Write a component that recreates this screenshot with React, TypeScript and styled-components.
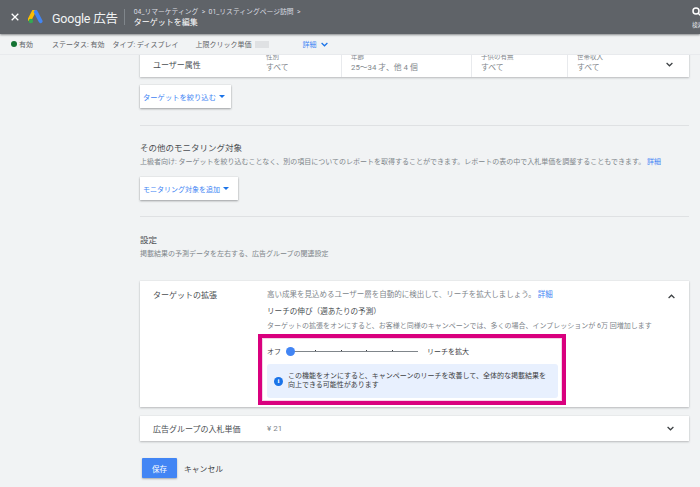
import React from "react";
import styled, { createGlobalStyle } from "styled-components";

const Global = createGlobalStyle`
  html, body { margin: 0; padding: 0; background: #f1f3f4; }
  body { font-family: Roboto, "Noto Sans CJK JP", sans-serif; color: #3c4043; }
`;
const Page = styled.div`
  position: relative; width: 700px; height: 487px; overflow: hidden; background: #f1f3f4;
  display: flex; flex-direction: column;
`;
const Header = styled.header`
  height: 34px; flex: none; background: #5f6368; display: flex; align-items: center;
  padding-left: 11px; color: #fff; box-shadow: 0 1px 2px rgba(60,64,67,.6); position: relative; z-index: 2;
`;
const CloseWrap = styled.span`display: flex; margin-right: 9px;`;
const Brand = styled.span`
  font-size: 12.5px; color: #f1f3f4; margin-left: 8px; letter-spacing: -0.2px; white-space: nowrap;
`;
const HeaderRule = styled.div`width: 1px; height: 16px; background: #80868b; margin: 0 9px 0 6px;`;
const Crumbs = styled.div`display: flex; flex-direction: column; flex: 1;`;
const CrumbTop = styled.div`font-size: 6.8px; line-height: 10px; color: #dadce0; white-space: nowrap; margin-top: 2px;`;
const CrumbTitle = styled.div`font-size: 8px; line-height: 12px; color: #fff; white-space: nowrap;`;
const SearchBox = styled.div`
  width: 8px; align-self: stretch; display: flex; flex-direction: column; align-items: flex-start;
  overflow: hidden; padding-top: 7px; box-sizing: border-box;
`;
const SearchText = styled.div`font-size: 5.5px; line-height: 6px; color: #e8eaed; white-space: nowrap; margin-top: 5px;`;
const StatusBar = styled.div`
  height: 21px; flex: none; display: flex; align-items: center; font-size: 7px; color: #5f6368;
  border-bottom: 1px solid #e8eaed; box-sizing: border-box; padding-left: 11px; white-space: nowrap;
`;
const Dot = styled.span`width: 6px; height: 6px; border-radius: 50%; background: #137333; margin-right: 2px;`;
const StatusItem = styled.span<{ $left: number }>`margin-left: ${p => p.$left}px;`;
const Blur = styled.span`display: inline-block; width: 14px; height: 7px; margin-left: 4px; background: #dfe1e3;`;
const DetailLink = styled.span`color: #4285f4; margin-left: 33px; font-size: 7px; display: flex; align-items: center; gap: 5px;`;
const Scroller = styled.main`flex: 1; overflow: hidden; padding: 0 11px 0 140px;`;
const Card = styled.section`
  background: #fff; box-shadow: 0 1px 2px rgba(60,64,67,.3), 0 0 1px rgba(60,64,67,.15);
`;
const AttrCard = styled(Card)`
  height: 30px; margin-top: -8px; display: grid; grid-template-columns: 126px 75px 130px 96px 1fr; align-items: center;
`;
const RowTitle = styled.div`font-size: 8px; color: #4a4e52; padding-left: 13px; white-space: nowrap;`;
const AttrTitle = styled(RowTitle)`padding-top: 4px;`;
const Attr = styled.div`
  border-left: 1px solid #e8eaed; height: 100%; display: flex; flex-direction: column; justify-content: flex-end;
  box-sizing: border-box; padding: 0 0 3px 9px; white-space: nowrap;
`;
const AttrFirst = styled(Attr)`border-left: 0; padding-left: 0;`;
const AttrLabel = styled.div`font-size: 6.5px; line-height: 9px; color: #80868b;`;
const AttrValue = styled.div`font-size: 7.8px; line-height: 12px; color: #80868b;`;
const AttrEnd = styled.div`display: flex; height: 100%; align-items: center; justify-content: space-between; border-left: 1px solid #e8eaed; padding: 4px 16px 0 9px; box-sizing: border-box; white-space: nowrap;`;
const AttrEndText = styled.div`display: flex; flex-direction: column; justify-content: flex-end; height: 100%; padding-bottom: 3px; box-sizing: border-box;`;
const MenuButton = styled.button<{ $w: number; $top: number; $size: number }>`
  display: flex; align-items: center; gap: 3px; width: ${p => p.$w}px; height: 23px; margin: ${p => p.$top}px 0 0;
  border: 0; background: #fff; color: #4285f4; font: inherit; font-size: ${p => p.$size}px; padding: 0 0 0 3px; white-space: nowrap;
  box-shadow: 0 1px 2px rgba(60,64,67,.45), 0 0 1px rgba(60,64,67,.2);
`;
const Caret = styled.span`width: 0; height: 0; border: 3px solid transparent; border-top: 3px solid #1a73e8; border-bottom: 0;`;
const Rule = styled.hr<{ $top: number }>`border: 0; height: 1px; background: #dfe1e3; margin: ${p => p.$top}px 0 0;`;
const Heading = styled.h2<{ $top: number }>`font-size: 8.5px; line-height: 14px; font-weight: 400; margin: ${p => p.$top}px 0 0; color: #4a4e52;`;
const Desc = styled.p`font-size: 7px; line-height: 12px; margin: 1px 0 0; color: #80868b; white-space: nowrap;`;
const Link = styled.span`color: #4285f4;`;
const ExpandCard = styled(Card)`
  height: 126px; margin-top: 21px; display: grid; grid-template-columns: 127px 1fr 38px; box-sizing: border-box; padding-top: 8px;
`;
const Body = styled.div`display: flex; flex-direction: column; font-size: 7.5px; color: #80868b; white-space: nowrap;`;
const BodyLine = styled.div`line-height: 12px;`;
const SubHead = styled.div`line-height: 12px; font-size: 7.6px; color: #4a4e52; margin-top: 5px;`;
const SmallLine = styled.div`line-height: 12px; font-size: 7px; margin-top: 2px;`;
const SliderRow = styled.div`display: flex; align-items: center; height: 12px; margin-top: 13px; font-size: 7px; color: #3c4043;`;
const Track = styled.div`
  position: relative; width: 130px; height: 1px; background: #80868b; margin: 0 9px 0 7px; display: flex; justify-content: space-between; padding: 0 25px 0 27px; box-sizing: border-box;
`;
const Tick = styled.span`width: 1px; height: 1px; margin-top: -1px; background: #3c4043;`;
const Thumb = styled.span`position: absolute; left: -2px; top: -4px; width: 9px; height: 9px; border-radius: 50%; background: #4285f4;`;
const Info = styled.div`
  width: 291px; height: 34px; margin-top: 7px; background: #e8f0fe; border-radius: 3px; box-sizing: border-box;
  display: flex; align-items: center; gap: 5px; padding-left: 7px; font-size: 7px; line-height: 9px; color: #3c4043;
`;
const InfoDot = styled.span`
  width: 9px; height: 9px; flex: none; border-radius: 50%; background: #1a73e8; color: #fff; font: 700 7px/9px "Liberation Serif", serif; text-align: center;
`;
const Toggle = styled.div`display: flex; justify-content: flex-start; padding: 5px 0 0 16px;`;
const BidToggle = styled(Toggle)`padding-top: 0;`;
const BidCard = styled(Card)`
  height: 25px; margin-top: 9px; display: grid; grid-template-columns: 127px 1fr 38px; align-items: center;
`;
const Price = styled.div`font-size: 8px; color: #80868b;`;
const Actions = styled.div`display: flex; align-items: center; margin: 17px 0 0 2px; gap: 7px;`;
const Save = styled.button`
  width: 35px; height: 20px; padding: 0; border: 0; border-radius: 1px; background: #4285f4; color: #fff; font: inherit; font-size: 7.5px;
  box-shadow: 0 1px 2px rgba(60,64,67,.4);
`;
const Cancel = styled.span`font-size: 7.8px; color: #3c4043;`;
const Highlight = styled.div`
  position: absolute; left: 258px; top: 334px; width: 308px; height: 71px; box-sizing: border-box;
  border: 4px solid #d9007e; box-shadow: inset 0 0 0 1px #f3d3e6;
`;
const Chevron = ({ up, color = "#3c4043" }: { up?: boolean; color?: string }) => (
  <svg width="7" height="5" viewBox="0 0 7 5" aria-hidden="true" style={{ display: "block", flex: "none" }}>
    <path d={up ? "M.6 4 3.5 1.2 6.4 4" : "M.6 1 3.5 3.8 6.4 1"} fill="none" stroke={color} strokeWidth="1.2" />
  </svg>
);
const Logo = () => (
  <svg width="16" height="14" viewBox="0 0 17 15" aria-hidden="true">
    <path d="M6.2 1.5 1.8 10" stroke="#fbbc04" strokeWidth="4.2" strokeLinecap="round" />
    <path d="M8.2 2l5.2 10" stroke="#4285f4" strokeWidth="4.2" strokeLinecap="round" />
    <circle cx="3" cy="11.8" r="2.4" fill="#34a853" />
  </svg>
);

export default function App() {
  return (
    <Page>
      <Global />
      <Header>
        <CloseWrap>
          <svg width="8" height="8" viewBox="0 0 8 8" aria-hidden="true">
            <path d="M.7.7l6.6 6.6M7.3.7.7 7.3" stroke="#fff" strokeWidth="1.3" />
          </svg>
        </CloseWrap>
        <Logo />
        <Brand>Google 広告</Brand>
        <HeaderRule />
        <Crumbs>
          <CrumbTop>04_リマーケティング &nbsp;&gt;&nbsp; 01_リスティングページ訪問 &nbsp;&gt;</CrumbTop>
          <CrumbTitle>ターゲットを編集</CrumbTitle>
        </Crumbs>
        <SearchBox>
          <svg width="10" height="10" viewBox="0 0 10 10" aria-hidden="true" style={{ flex: "none" }}>
            <circle cx="4" cy="4" r="3" fill="none" stroke="#fff" strokeWidth="1.5" />
            <path d="M6.2 6.2 9.4 9.4" stroke="#fff" strokeWidth="1.5" />
          </svg>
          <SearchText>検索</SearchText>
        </SearchBox>
      </Header>
      <StatusBar>
        <Dot />有効
        <StatusItem $left={19}>ステータス: 有効</StatusItem>
        <StatusItem $left={8}>タイプ: ディスプレイ</StatusItem>
        <StatusItem $left={17}>上限クリック単価</StatusItem>
        <Blur />
        <DetailLink>詳細 <Chevron color="#1a73e8" /></DetailLink>
      </StatusBar>
      <Scroller>
        <AttrCard>
          <AttrTitle>ユーザー属性</AttrTitle>
          <AttrFirst><AttrLabel>性別</AttrLabel><AttrValue>すべて</AttrValue></AttrFirst>
          <Attr><AttrLabel>年齢</AttrLabel><AttrValue>25～34 才、他 4 個</AttrValue></Attr>
          <Attr><AttrLabel>子供の有無</AttrLabel><AttrValue>すべて</AttrValue></Attr>
          <AttrEnd>
            <AttrEndText><AttrLabel>世帯収入</AttrLabel><AttrValue>すべて</AttrValue></AttrEndText>
            <Chevron />
          </AttrEnd>
        </AttrCard>
        <MenuButton $w={91} $top={8} $size={7.3}>ターゲットを絞り込む <Caret /></MenuButton>
        <Rule $top={17} />
        <Heading $top={15}>その他のモニタリング対象</Heading>
        <Desc>上級者向け: ターゲットを絞り込むことなく、別の項目についてのレポートを取得することができます。レポートの表の中で入札単価を調整することもできます。 <Link>詳細</Link></Desc>
        <MenuButton $w={98} $top={9} $size={7}>モニタリング対象を追加 <Caret /></MenuButton>
        <Rule $top={16} />
        <Heading $top={16}>設定</Heading>
        <Desc>掲載結果の予測データを左右する、広告グループの関連設定</Desc>
        <ExpandCard>
          <RowTitle>ターゲットの拡張</RowTitle>
          <Body>
            <BodyLine>高い成果を見込めるユーザー層を自動的に検出して、リーチを拡大しましょう。 <Link>詳細</Link></BodyLine>
            <SubHead>リーチの伸び（週あたりの予測）</SubHead>
            <SmallLine>ターゲットの拡張をオンにすると、お客様と同様のキャンペーンでは、多くの場合、インプレッションが 6万 回増加します</SmallLine>
            <SliderRow>
              オフ
              <Track><Thumb /><Tick /><Tick /><Tick /><Tick /></Track>
              リーチを拡大
            </SliderRow>
            <Info>
              <InfoDot>i</InfoDot>
              <span>この機能をオンにすると、キャンペーンのリーチを改善して、全体的な掲載結果を<br />向上できる可能性があります</span>
            </Info>
          </Body>
          <Toggle><Chevron up /></Toggle>
        </ExpandCard>
        <BidCard>
          <RowTitle>広告グループの入札単価</RowTitle>
          <Price>¥ 21</Price>
          <BidToggle><Chevron /></BidToggle>
        </BidCard>
        <Actions>
          <Save>保存</Save>
          <Cancel>キャンセル</Cancel>
        </Actions>
      </Scroller>
      <Highlight />
    </Page>
  );
}
